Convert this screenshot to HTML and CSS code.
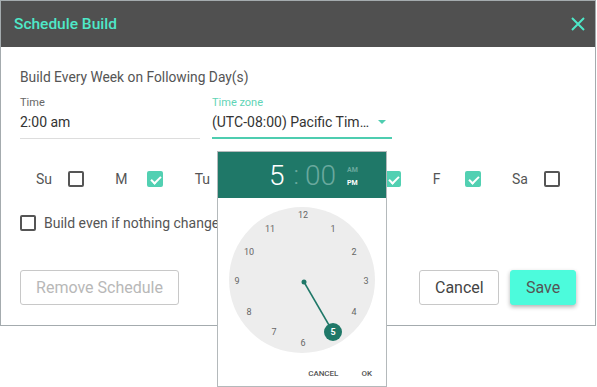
FILE: index.html
```html
<!DOCTYPE html>
<html lang="en">
<head>
  <meta charset="UTF-8" />
  <title>Schedule Build</title>
  <link rel="stylesheet" href="styles.css">
</head>
<body>
  <div class="dialog">
    <div class="dialog-header">
      <span class="dialog-title">Schedule Build</span>
      <svg class="close" width="14" height="14" viewBox="0 0 14 14">
        <path d="M1 1 L13 13 M13 1 L1 13" stroke="#4de8c8" stroke-width="2" fill="none" />
      </svg>
    </div>

    <div class="dialog-body">
      <div class="intro">Build Every Week on Following Day(s)</div>

      <div class="fields">
        <div class="field">
          <div class="field-label">Time</div>
          <div class="field-value">2:00 am</div>
        </div>
        <div class="field field-focus">
          <div class="field-label">Time zone</div>
          <div class="field-value">
            <span>(UTC-08:00) Pacific Tim…</span>
            <span class="caret"></span>
          </div>
        </div>
      </div>

      <div class="days">
        <div class="day"><span class="day-name">Su</span><span class="check"></span></div>
        <div class="day"><span class="day-name">M</span><span class="check on"></span></div>
        <div class="day"><span class="day-name">Tu</span><span class="check"></span></div>
        <div class="day"><span class="day-name">W</span><span class="check on"></span></div>
        <div class="day"><span class="day-name">Th</span><span class="check on"></span></div>
        <div class="day"><span class="day-name">F</span><span class="check on"></span></div>
        <div class="day"><span class="day-name">Sa</span><span class="check"></span></div>
      </div>

      <div class="always">
        <span class="check"></span>
        <span>Build even if nothing changed</span>
      </div>

      <div class="actions">
        <button class="btn btn-muted">Remove Schedule</button>
        <div class="actions-right">
          <button class="btn btn-cancel">Cancel</button>
          <button class="btn btn-save">Save</button>
        </div>
      </div>
    </div>
  </div>

  <!-- time picker popup -->
  <div class="picker">
    <div class="picker-head">
      <span class="hour">5</span>
      <span class="colon">:</span>
      <span class="minutes">00</span>
      <span class="ampm">
        <span class="am">AM</span>
        <span class="pm">PM</span>
      </span>
    </div>
    <svg class="face" width="168" height="162" viewBox="0 0 168 162">
      <circle cx="84" cy="82" r="73" fill="#ededed" />
      <line x1="86" y1="84" x2="115" y2="134" stroke="#1f7868" stroke-width="1.5" />
      <circle cx="86" cy="84" r="2.5" fill="#1f7868" />
      <circle cx="115" cy="134" r="9" fill="#1f7868" />
      <g class="num">
        <text x="85" y="17">12</text>
        <text x="115" y="31">1</text>
        <text x="136" y="54">2</text>
        <text x="148" y="83">3</text>
        <text x="136" y="114">4</text>
        <text x="85" y="145">6</text>
        <text x="56" y="134">7</text>
        <text x="31" y="114">8</text>
        <text x="19" y="83">9</text>
        <text x="31" y="54">10</text>
        <text x="52" y="31">11</text>
      </g>
      <text class="num-sel" x="115" y="134">5</text>
    </svg>
    <div class="picker-actions">
      <span>CANCEL</span>
      <span>OK</span>
    </div>
  </div>
</body>
</html>
```

FILE: styles.css
```css
body {
  margin: 0;
  background: #ffffff;
  font-family: Roboto, "Liberation Sans", sans-serif;
  color: #555555;
}
.dialog {
  width: 594px;
  border: 1px solid #a4abae;
  background: #ffffff;
}
.dialog-header {
  height: 46px;
  background: #505050;
  display: flex;
  align-items: center;
  justify-content: space-between;
  padding: 0 10px 0 13px;
}
.dialog-title {
  color: #4ee8c8;
  font-size: 15.5px;
  font-weight: 500;
}
.close {
  margin-top: -1px;
}
.dialog-body {
  padding: 20px 19px 20px;
}
.intro {
  font-size: 13.8px;
  line-height: 20px;
  color: #555555;
}
.fields {
  display: flex;
  gap: 12px;
  margin-top: 9px;
}
.field {
  width: 180px;
  border-bottom: 1px solid #dddddd;
}
.field-label {
  font-size: 11px;
  line-height: 14px;
  color: #666666;
}
.field-value {
  font-size: 14px;
  line-height: 20px;
  color: #333333;
  margin-top: 2px;
  padding-bottom: 4px;
  display: flex;
  align-items: center;
  justify-content: space-between;
  white-space: nowrap;
}
.field-focus {
  border-bottom: 2px solid #4ecdb0;
}
.field-focus .field-label {
  color: #5fd4b6;
}
.field-focus .field-value {
  padding-bottom: 5px;
}
.caret {
  width: 0;
  height: 0;
  border-left: 4px solid transparent;
  border-right: 4px solid transparent;
  border-top: 4px solid #4ecdb0;
  margin-right: 6px;
}
.days {
  display: grid;
  grid-template-columns: repeat(7, 79.33px);
  padding-left: 16px;
  margin-top: 30px;
}
.day {
  display: flex;
  align-items: center;
  font-size: 14px;
  line-height: 20px;
}
.day-name {
  width: 32px;
}
.check {
  box-sizing: border-box;
  width: 16px;
  height: 16px;
  border: 2px solid #555555;
  border-radius: 2px;
  display: inline-block;
  position: relative;
}
.check.on {
  background: #52d0b2;
  border-color: #52d0b2;
}
.check.on::after {
  content: "";
  position: absolute;
  left: 4px;
  top: 1px;
  width: 4px;
  height: 8px;
  border: solid #ffffff;
  border-width: 0 2px 2px 0;
  transform: rotate(45deg);
}
.always {
  display: flex;
  align-items: center;
  gap: 8px;
  margin-top: 24px;
  font-size: 14px;
  line-height: 20px;
}
.actions {
  display: flex;
  justify-content: space-between;
  margin-top: 37px;
}
.actions-right {
  display: flex;
  gap: 11px;
}
.btn {
  height: 35px;
  padding: 0 15px;
  font-family: Roboto, "Liberation Sans", sans-serif;
  font-size: 16px;
  color: #444444;
  background: #ffffff;
  border: 1px solid #c8c8c8;
  border-radius: 3px;
}
.btn-muted {
  color: #b8b8b8;
  width: 159px;
}
.btn-cancel {
  width: 80px;
}
.btn-save {
  background: #4cfbdc;
  border-color: #4cfbdc;
  color: #555555;
  width: 66px;
  box-shadow: 0 2px 4px rgba(0, 0, 0, 0.3);
}
.picker {
  position: absolute;
  left: 217px;
  top: 151px;
  width: 168px;
  border: 1px solid #b4b9bb;
  background: #ffffff;
}
.picker-head {
  height: 46px;
  background: #1f7868;
  display: flex;
  align-items: center;
  padding-left: 51px;
  color: #ffffff;
}
.hour, .minutes {
  font-size: 28px;
  font-weight: 300;
}
.colon {
  font-size: 26px;
  font-weight: 300;
  color: #6aa99e;
  margin: 0 6px 0 9px;
}
.minutes {
  color: #6aa99e;
}
.ampm {
  display: flex;
  flex-direction: column;
  margin-left: 11px;
  margin-top: 3px;
  font-size: 7px;
  font-weight: 700;
  line-height: 13px;
}
.am {
  color: #6aa99e;
}
.face {
  display: block;
}
.num text {
  font-family: Roboto, "Liberation Sans", sans-serif;
  font-size: 9px;
  fill: #666666;
  text-anchor: middle;
  dominant-baseline: central;
}
.num-sel {
  font-family: Roboto, "Liberation Sans", sans-serif;
  font-size: 9px;
  font-weight: 700;
  fill: #ffffff;
  text-anchor: middle;
  dominant-baseline: central;
}
.picker-actions {
  height: 26px;
  display: flex;
  align-items: center;
  justify-content: flex-end;
  gap: 23px;
  padding-right: 14px;
  font-size: 8px;
  font-weight: 500;
  color: #555555;
}
```
